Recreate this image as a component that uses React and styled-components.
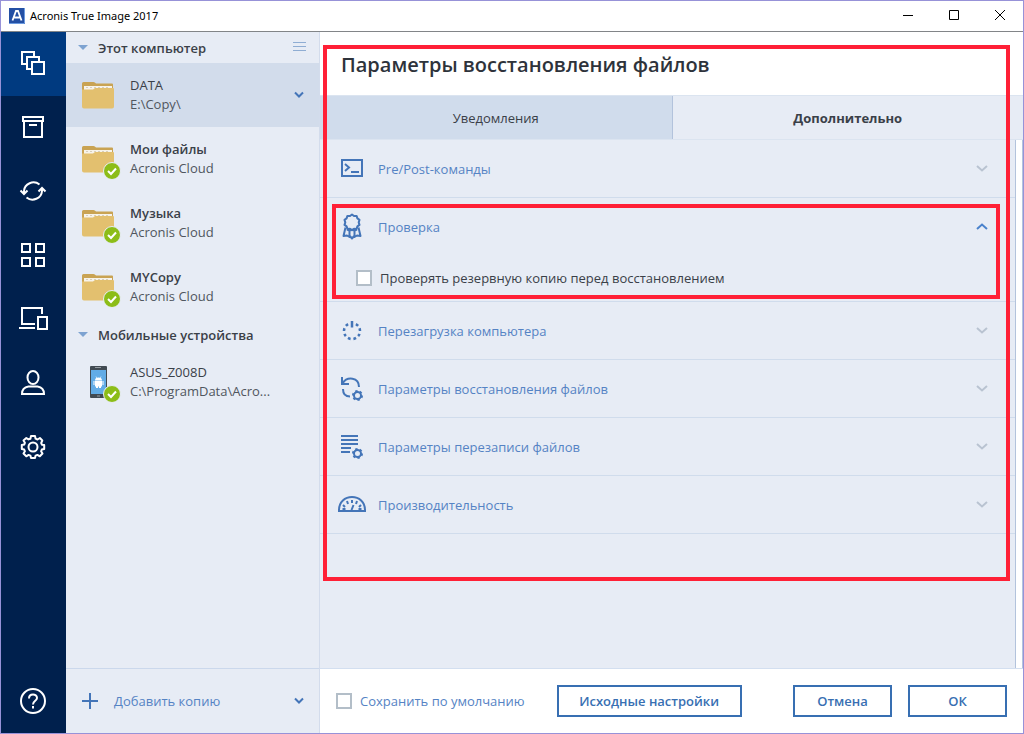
import React, { useState } from "react";
import styled, { createGlobalStyle } from "styled-components";

const navItems = ["backup", "archive", "sync", "tools", "dashboard", "account", "settings"];

const cloudFolders = [
  { name: "DATA", path: "E:\\Copy\\", selected: true },
  { name: "Мои файлы", path: "Acronis Cloud", bold: true, synced: true },
  { name: "Музыка", path: "Acronis Cloud", bold: true, synced: true },
  { name: "MYCopy", path: "Acronis Cloud", bold: true, synced: true },
];

const NavIcon = ({ name }) => (
  <svg width="32" height="32" viewBox="0 0 32 32" fill="none" stroke="#fff" strokeWidth="2">
    {name === "backup" && (
      <>
        <path d="M9 17H5V5h12v4" />
        <path d="M14 22h-4V10h12v4" />
        <path d="M15 15h12v12H15z" />
      </>
    )}
    {name === "archive" && (
      <path d="M6 6h20v4H6zM7 10v16h18V10M12 14h8" />
    )}
    {name === "sync" && (
      <>
        <path d="M22.500 9.500A9.500 9 0 0 0 7 16v2M9.500 22.500A9.500 9 0 0 0 25 16v-2" />
        <path d="M3.500 15.500 7 19l3.500-3.500M21.500 16.500 25 13l3.500 3.500" />
      </>
    )}
    {name === "tools" && (
      <path d="M5 5h8v8H5zM19 5h8v8h-8zM5 19h8v8H5zM19 19h8v8h-8z" />
    )}
    {name === "dashboard" && (
      <>
        <path d="M25 11V5H5v16h13M2 25h16" />
        <path d="M21 14h9v12h-9z" />
      </>
    )}
    {name === "account" && (
      <>
        <ellipse cx="16" cy="10.500" rx="5.500" ry="6.500" />
        <path d="M5 27c0-5 3-7 6.500-7.500h9c3.500.5 6.500 2.500 6.500 7.500z" />
      </>
    )}
    {name === "settings" && (
      <>
        <path
          strokeLinejoin="round"
          d="M14 5h4l.6 2.700 1.900.8L22.900 7l2.400 2.500-1.100 2.500.7 1.700L27.200 14v4l-2.400.5-.7 1.800 1.400 2.200-2.700 2.800-2.400-1.400-1.800.7L18 27h-4l-.6-2.400-1.800-.7-2.300 1.400-2.800-2.800L7.900 20.300l-.7-1.800L4.800 18v-4l2.400-.5.7-1.700-1.400-2.300L9.300 7l2.200 1.400 1.900-.7z"
        />
        <circle cx="16" cy="16" r="4.500" />
      </>
    )}
    {name === "help" && (
      <>
        <circle cx="16" cy="16" r="12" />
        <path d="M12 13.500c0-5.500 8-5 8-.5 0 3-4 2.500-4 6.500M16 21v2.500" />
      </>
    )}
  </svg>
);

const Cog = () => (
  <>
    <circle cx="21.500" cy="22.500" r="3.500" />
    <circle cx="21.500" cy="22.500" r="4.500" pathLength="12" strokeDasharray="1 1" />
  </>
);

const OptionIcon = ({ name }) => (
  <svg width="32" height="32" viewBox="0 0 32 32" fill="none" stroke="#4475b8" strokeWidth="2">
    {name === "command" && (
      <>
        <path d="M6 7h20v16H6z" />
        <path d="M9 11l4 3.500L9 18M15 19h8" />
      </>
    )}
    {name === "medal" && (
      <>
        <path
          strokeLinejoin="round"
          d="M16 3.500l2 1.500 2.600-.1.800 2.500 2.100 1.500-.8 2.500.8 2.500-2.100 1.500-.8 2.500-2.600-.1-2 1.500-2-1.500-2.600.1-.8-2.500-2.100-1.500.8-2.500-.8-2.500 2.100-1.500.8-2.500L14 5z"
        />
        <path
          strokeLinejoin="round"
          d="M9.500 16.500L7.500 25l3.500-.5 2.500 1.500v-6M22.500 16.500l2 8.500-3.500-.5-2.500 1.500v-6M13.500 24.500L16 27.500l2.500-3M11 18.500l2.500 1.500 2.500-1.500 2.500 1.500 2.500-1.500"
        />
      </>
    )}
    {name === "restart" && (
      <g strokeWidth="2.500">
        <path d="M16 6v6.500" />
        <path d="M18.700 8.500a8 8 0 1 1-5.400 0" pathLength="8" strokeDasharray=".5 .5" strokeDashoffset="-.25" />
      </g>
    )}
    {name === "recover" && (
      <>
        <path d="M6 4v7h7M6.500 10.500C11 3 23 4 23 14" />
        <path d="M7 16c0 5 3 7.500 7 7.500" />
        <Cog />
      </>
    )}
    {name === "overwrite" && (
      <>
        <path d="M5 5h17M5 9h17M5 13h17M5 17h10M5 21h9" />
        <Cog />
      </>
    )}
    {name === "gauge" && (
      <>
        <path d="M3 22v-1C3 13 9 8 16 8s13 5 13 13v1z" />
        <path d="M16 11v3M11 12l1 3M21 12l-1 3M7 16l2 2M25 16l-2 2M6.500 20h3M22.500 20h3M15.500 21l2-5" />
      </>
    )}
  </svg>
);

const Chevron = ({ color, up }) => (
  <svg width="14" height="14" viewBox="0 0 14 14" fill="none" stroke={color} strokeWidth="2">
    <path d={up ? "M2 9l5-4.500L12 9" : "M2 4l5 4.500L12 4"} />
  </svg>
);

const SmallChevron = () => (
  <svg width="14" height="14" viewBox="0 0 14 14" fill="none" stroke="#4475b8" strokeWidth="2">
    <path d="M3 4.500l4 4 4-4" />
  </svg>
);

const Check = () => (
  <Badge width="18" height="18" viewBox="0 0 18 18">
    <circle cx="9" cy="9" r="8.500" fill="#8cbd18" stroke="#e8ecf5" />
    <path d="M5 9l3 3 5-5.500" fill="none" stroke="#fff" strokeWidth="2" />
  </Badge>
);

const Folder = () => (
  <svg width="34" height="32" viewBox="0 0 34 32">
    <path d="M1 4.500Q1 3 2.500 3h10Q14 3 15 4.500h16q1 0 1 1V14H1z" fill="#c9a353" />
    <path d="M3 7h28v5H3z" fill="#f7f3ea" />
    <path d="M5 8.500h24" stroke="#d8cfba" strokeDasharray="2 2" />
    <path d="M1 10.500h11l2-1.500h18q1 0 1 1v17.500q0 2-2 2H3q-2 0-2-2z" fill="#e3c06f" />
  </svg>
);

const Phone = () => (
  <svg width="34" height="32" viewBox="0 0 34 32">
    <rect x="9" width="17" height="32" rx="1" fill="#414a52" />
    <rect x="10" y="4" width="15" height="24" fill="#62ace6" />
    <path d="M14 1.500h6M16 30h3" stroke="#949ba1" />
    <path d="M14 15h7v5.500h-7zM12.500 15h1v4h-1zM21.500 15h1v4h-1zM15 20h2v2h-2zM18 20h2v2h-2zM14 14.500a3.500 3 0 0 1 7 0z" fill="#fff" />
    <path d="M15 10.500l1 2M20 10.500l-1 2" stroke="#fff" strokeWidth=".6" />
  </svg>
);

const Device = ({ name, path, selected, bold, synced, phone }) => (
  <DeviceRow $selected={selected}>
    <Thumb>
      {phone ? <Phone /> : <Folder />}
      {synced && <Check />}
    </Thumb>
    <DeviceText>
      <DeviceName $bold={bold}>{name}</DeviceName>
      <DevicePath>{path}</DevicePath>
    </DeviceText>
    {selected && <SmallChevron />}
  </DeviceRow>
);

const Option = ({ icon, title, open, children }) => (
  <OptionPanel>
    <OptionHeader aria-expanded={!!open}>
      <OptionIcon name={icon} />
      <OptionTitle>{title}</OptionTitle>
      <Chevron color={open ? "#4a82cc" : "#b9c3d1"} up={open} />
    </OptionHeader>
    {children}
  </OptionPanel>
);

const App = () => {
  const [validate, setValidate] = useState(false);
  const [saveDefault, setSaveDefault] = useState(false);

  return (
    <>
      <GlobalStyle />
      <Window>
        <TitleBar>
          <svg width="16" height="16" viewBox="0 0 16 16">
            <path d="M0 0h16v16H0z" fill="#2450a4" />
            <path d="M0 15.500h15.500V0" fill="none" stroke="#6c9be0" />
            <path d="M3.500 12.500L7 3h2l3.500 9.500M5 9.500h6" fill="none" stroke="#fff" strokeWidth="1.800" />
          </svg>
          <AppName>Acronis True Image 2017</AppName>
          <WindowButton aria-label="Свернуть">
            <svg width="12" height="12" viewBox="0 0 12 12" stroke="#000"><path d="M1 5.500h10" /></svg>
          </WindowButton>
          <WindowButton aria-label="Развернуть">
            <svg width="12" height="12" viewBox="0 0 12 12" stroke="#000" fill="none"><path d="M1.500.5h9v9h-9z" /></svg>
          </WindowButton>
          <WindowButton aria-label="Закрыть">
            <svg width="12" height="12" viewBox="0 0 12 12" stroke="#000"><path d="M1 0l10 10M11 0L1 10" /></svg>
          </WindowButton>
        </TitleBar>
        <Body>
          <Nav>
            {navItems.map((name) => (
              <NavButton key={name} $active={name === "backup"} aria-label={name}>
                <NavIcon name={name} />
              </NavButton>
            ))}
            <HelpButton aria-label="help">
              <NavIcon name="help" />
            </HelpButton>
          </Nav>

          <Sidebar>
            <GroupHeader>
              <Triangle />
              <GroupName>Этот компьютер</GroupName>
              <svg width="13" height="11" viewBox="0 0 13 11" stroke="#8fadd3">
                <path d="M0 .5h13M0 4.500h13M0 8.500h13" />
              </svg>
            </GroupHeader>
            {cloudFolders.map((item) => (
              <Device key={item.name} {...item} />
            ))}
            <GroupHeader>
              <Triangle />
              <GroupName>Мобильные устройства</GroupName>
            </GroupHeader>
            <Device name="ASUS_Z008D" path="C:\ProgramData\Acro..." phone synced />
            <AddBackup>
              <svg width="16" height="16" viewBox="0 0 16 16" stroke="#4475b8" strokeWidth="2">
                <path d="M8 0v16M0 8h16" />
              </svg>
              <AddLabel>Добавить копию</AddLabel>
              <SmallChevron />
            </AddBackup>
          </Sidebar>

          <Main>
            <Heading>Параметры восстановления файлов</Heading>
            <Tabs role="tablist">
              <Tab role="tab" aria-selected="false">Уведомления</Tab>
              <Tab role="tab" aria-selected="true" $active>Дополнительно</Tab>
            </Tabs>
            <Scroller>
              <Options>
                <Option icon="command" title="Pre/Post-команды" />
                <Option icon="medal" title="Проверка" open>
                  <OptionBody>
                    <CheckLabel>
                      <Checkbox
                        type="checkbox"
                        checked={validate}
                        onChange={(e) => setValidate(e.target.checked)}
                      />
                      Проверять резервную копию перед восстановлением
                    </CheckLabel>
                  </OptionBody>
                  <PanelFrame />
                </Option>
                <Option icon="restart" title="Перезагрузка компьютера" />
                <Option icon="recover" title="Параметры восстановления файлов" />
                <Option icon="overwrite" title="Параметры перезаписи файлов" />
                <Option icon="gauge" title="Производительность" />
              </Options>
            </Scroller>
            <Footer>
              <CheckLabel $link>
                <Checkbox
                  type="checkbox"
                  checked={saveDefault}
                  onChange={(e) => setSaveDefault(e.target.checked)}
                />
                Сохранить по умолчанию
              </CheckLabel>
              <WideButton>Исходные настройки</WideButton>
              <Actions>
                <Button>Отмена</Button>
                <Button>ОК</Button>
              </Actions>
            </Footer>
            <MainFrame />
          </Main>
        </Body>
      </Window>
    </>
  );
};

export default App;

const GlobalStyle = createGlobalStyle`
  * {
    box-sizing: border-box;
  }
  body {
    margin: 0;
    font-family: "Open Sans", "Noto Sans", sans-serif;
    font-size: 13px;
    line-height: 18px;
    color: #3a4048;
  }
  button {
    font: inherit;
    color: inherit;
    border: 0;
    padding: 0;
    background: none;
  }
  svg {
    display: block;
    flex: none;
  }
`;

const Window = styled.div`
  display: flex;
  flex-direction: column;
  min-height: 100vh;
  border: 1px solid #9792d8;
  background: #fff;
`;

const TitleBar = styled.header`
  display: flex;
  align-items: center;
  height: 31px;
  padding-left: 8px;
  border-bottom: 1px solid #828588;
`;

const AppName = styled.div`
  flex: 1;
  padding-left: 5px;
  font-family: "Noto Sans", sans-serif;
  font-size: 11px;
  color: #000;
`;

const WindowButton = styled.button`
  display: flex;
  align-items: center;
  justify-content: center;
  width: 46px;
  height: 30px;
`;

const Body = styled.div`
  display: flex;
  flex: 1;
`;

const Nav = styled.nav`
  display: flex;
  flex-direction: column;
  flex: none;
  width: 65px;
  background: #00204d;
`;

const NavButton = styled.button`
  display: flex;
  align-items: center;
  justify-content: center;
  height: 64px;
  padding: 0 2px 2px 0;
  background: ${({ $active }) => ($active ? "#003a80" : "transparent")};
`;

const HelpButton = styled(NavButton)`
  margin-top: auto;
  padding-bottom: 0;
`;

const Sidebar = styled.aside`
  display: flex;
  flex-direction: column;
  flex: none;
  width: 254px;
  background: #e7ecf5;
  border-right: 1px solid #d3dcec;
`;

const GroupHeader = styled.div`
  display: flex;
  align-items: center;
  height: 31px;
  padding: 0 13px 0 12px;
`;

const Triangle = styled.span`
  border: 5px solid transparent;
  border-top-color: #7ea3d1;
  border-bottom: 0;
`;

const GroupName = styled.h2`
  flex: 1;
  margin: 0 0 0 10px;
  font-size: 13px;
  font-weight: 600;
`;

const DeviceRow = styled.button`
  display: flex;
  align-items: center;
  height: 64px;
  padding: 0 13px 0 15px;
  text-align: left;
  background: ${({ $selected }) => ($selected ? "#d2dceb" : "transparent")};
`;

const Thumb = styled.span`
  position: relative;
  flex: none;
`;

const Badge = styled.svg`
  position: absolute;
  right: -6px;
  bottom: -5px;
`;

const DeviceText = styled.span`
  display: flex;
  flex-direction: column;
  flex: 1;
  padding-left: 15px;
  line-height: 19px;
  white-space: nowrap;
`;

const DeviceName = styled.span`
  font-weight: ${({ $bold }) => ($bold ? 600 : 500)};
`;

const DevicePath = styled.span`
  color: #50565e;
`;

const AddBackup = styled.button`
  display: flex;
  align-items: center;
  height: 65px;
  margin-top: auto;
  padding: 0 13px 0 16px;
  border-top: 1px solid #cbd8ec;
  color: #5583c4;
`;

const AddLabel = styled.span`
  flex: 1;
  padding-left: 16px;
  text-align: left;
`;

const Main = styled.main`
  position: relative;
  display: flex;
  flex-direction: column;
  flex: 1;
  min-width: 0;
`;

const Heading = styled.h1`
  height: 63px;
  margin: 0;
  padding: 18px 21px 0;
  font-size: 20px;
  font-weight: 600;
  line-height: 30px;
  color: #2e333b;
`;

const Tabs = styled.div`
  display: grid;
  grid-template-columns: 1fr 1fr;
  height: 45px;
  border-top: 1px solid #dbe4f0;
  border-bottom: 1px solid #dbe4f0;
`;

const Tab = styled.button`
  font-weight: ${({ $active }) => ($active ? 700 : 400)};
  background: ${({ $active }) => ($active ? "#e7ecf5" : "#d0dcec")};

  & + & {
    border-left: 1px solid #b3c3dc;
  }
`;

const Scroller = styled.div`
  flex: 1;
  padding-right: 6px;
  border-right: 1px solid #b3c3dc;
`;

const Options = styled.div`
  height: 100%;
  background: #e7ecf5;
  border-right: 1px solid #b3c3dc;
`;

const OptionPanel = styled.section`
  position: relative;
  border-bottom: 1px solid #d0dcec;
`;

const OptionHeader = styled.button`
  display: flex;
  align-items: center;
  width: 100%;
  height: 57px;
  padding: 0 26px 0 16px;
  color: #5583c4;
`;

const OptionTitle = styled.span`
  flex: 1;
  padding-left: 10px;
  text-align: left;
`;

const OptionBody = styled.div`
  height: 46px;
  padding: 14px 36px 0;
`;

const CheckLabel = styled.label`
  display: flex;
  align-items: center;
  gap: 8px;
  white-space: nowrap;
  color: ${({ $link }) => ($link ? "#5583c4" : "#3a4048")};
`;

const Checkbox = styled.input`
  appearance: none;
  flex: none;
  width: 16px;
  height: 16px;
  margin: 0;
  border: 2px solid #b3bec8;
  background: #fff;

  &:checked {
    background: #4475b8;
  }
`;

const Footer = styled.footer`
  display: flex;
  align-items: center;
  height: 65px;
  padding: 0 16px;
  border-top: 1px solid #d3dff0;
`;

const Button = styled.button`
  width: 99px;
  height: 32px;
  border: 2px solid #386fb2;
  font-weight: 600;
  color: #386fb2;
  background: #fff;
`;

const WideButton = styled(Button)`
  width: 185px;
  margin-left: 32px;
`;

const Actions = styled.div`
  display: flex;
  gap: 16px;
  margin-left: auto;
`;

/* red highlight frames drawn over the settings */
const PanelFrame = styled.div`
  position: absolute;
  inset: 6px 15px 2px 12px;
  border: 4px solid #ff2036;
  pointer-events: none;
`;

const MainFrame = styled.div`
  position: absolute;
  inset: 13px 13px 152px 3px;
  border: 4px solid #ff2036;
  pointer-events: none;
`;
